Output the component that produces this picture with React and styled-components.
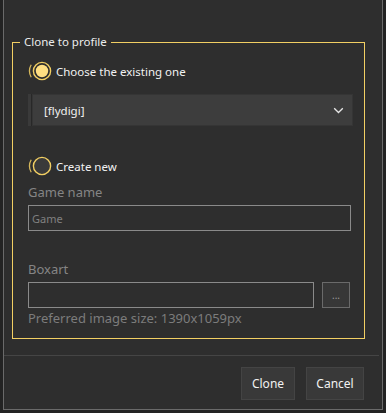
import styled, { createGlobalStyle } from "styled-components";

const Global = createGlobalStyle`
  body {
    margin: 0;
    background: #232323;
    font-family: "Noto Sans", "Open Sans", sans-serif;
  }
`;

const YELLOW = "#f2cf63";

const Dialog = styled.div`
  box-sizing: border-box;
  width: 380px;
  height: 410px;
  margin-left: 3px;
  background: #2e2e2e;
  border: 1px solid #6a6a6a;
  border-top: none;
  display: flex;
  flex-direction: column;
  padding-top: 34px;
`;

const Group = styled.fieldset`
  box-sizing: border-box;
  width: 353px;
  margin: 0 0 0 8px;
  padding: 0 11px 11px 15px;
  border: 1px solid ${YELLOW};
  display: flex;
  flex-direction: column;
`;

const Legend = styled.legend`
  margin-left: -8px;
  padding: 0 4px;
  color: #ececec;
  font-size: 11.5px;
  line-height: 16px;
`;

const RadioRow = styled.label`
  display: flex;
  align-items: center;
  gap: 3px;
  height: 20px;
  margin-top: ${(p) => p.$top}px;
  margin-left: -1px;
  color: #f2f2f2;
  font-size: 11.5px;
`;

const Select = styled.div`
  display: flex;
  height: 32px;
  margin-top: 13px;
`;

const SelectStrip = styled.div`
  width: 3px;
  background: #3a3a3a;
  border-right: 1px solid #282828;
`;

const SelectBox = styled.div`
  flex: 1;
  box-sizing: border-box;
  display: flex;
  align-items: center;
  justify-content: space-between;
  padding: 0 8px 0 11px;
  background: #3d3d3d;
  border: 1px solid #353535;
  color: #f0f0f0;
  font-size: 11.5px;
`;

const Label = styled.div`
  margin-top: ${(p) => p.$top}px;
  color: #858585;
  font-size: 13px;
  line-height: 18px;
`;

const Input = styled.div`
  box-sizing: border-box;
  width: ${(p) => p.$w}px;
  height: 26px;
  margin-top: ${(p) => p.$top || 0}px;
  border: 1px solid #8a8a8a;
  padding-left: 3px;
  display: flex;
  align-items: center;
  color: #808080;
  font-size: 11px;
`;

const FileRow = styled.div`
  display: flex;
  gap: 8px;
  margin-top: 4px;
`;

const BrowseButton = styled.button`
  box-sizing: border-box;
  width: 28px;
  height: 26px;
  padding: 0;
  background: #373737;
  border: 1px solid #6a6a6a;
  color: #9a9a9a;
  font-family: inherit;
  font-size: 10px;
  line-height: 1;
`;

const Hint = styled.div`
  margin-top: 1px;
  color: #7c7c7c;
  font-size: 13px;
  line-height: 18px;
`;

const Separator = styled.div`
  height: 1px;
  margin: 16px 3px 0 0;
  background: #454545;
`;

const Footer = styled.div`
  display: flex;
  justify-content: flex-end;
  gap: 11px;
  padding: 11px 18px 0 0;
`;

const Button = styled.button`
  box-sizing: border-box;
  width: ${(p) => p.$w}px;
  height: 33px;
  background: #393939;
  border: 1px solid #444;
  color: #f2f2f2;
  font-family: inherit;
  font-size: 12px;
`;

const Radio = ({ checked }) => (
  <svg width="26" height="22" viewBox="0 0 26 22">
    <path
      d="M4.2 4.8 A12.5 12.5 0 0 0 4.2 17.2"
      fill="none"
      stroke={YELLOW}
      strokeWidth="1.3"
      opacity="0.85"
    />
    <circle
      cx="15"
      cy="11"
      r="8.6"
      fill={checked ? "#2e2e2e" : "#3a3a3a"}
      stroke={YELLOW}
      strokeWidth="1.4"
    />
    {checked && <circle cx="15" cy="11" r="6.2" fill="#ffdf82" />}
  </svg>
);

const Chevron = () => (
  <svg width="11" height="7" viewBox="0 0 11 7">
    <polyline
      points="1.2,1.2 5.5,5.5 9.8,1.2"
      fill="none"
      stroke="#e6e6e6"
      strokeWidth="1.3"
    />
  </svg>
);

export default function App() {
  return (
    <>
      <Global />
      <Dialog>
        <Group>
          <Legend>Clone to profile</Legend>
          <RadioRow $top={11}>
            <Radio checked />
            Choose the existing one
          </RadioRow>
          <Select>
            <SelectStrip />
            <SelectBox>
              [flydigi]
              <Chevron />
            </SelectBox>
          </Select>
          <RadioRow $top={30}>
            <Radio />
            Create new
          </RadioRow>
          <Label $top={7}>Game name</Label>
          <Input $w={323} $top={4}>
            Game
          </Input>
          <Label $top={29}>Boxart</Label>
          <FileRow>
            <Input $w={286} />
            <BrowseButton>...</BrowseButton>
          </FileRow>
          <Hint>Preferred image size: 1390x1059px</Hint>
        </Group>
        <Separator />
        <Footer>
          <Button $w={54}>Clone</Button>
          <Button $w={58}>Cancel</Button>
        </Footer>
      </Dialog>
    </>
  );
}
